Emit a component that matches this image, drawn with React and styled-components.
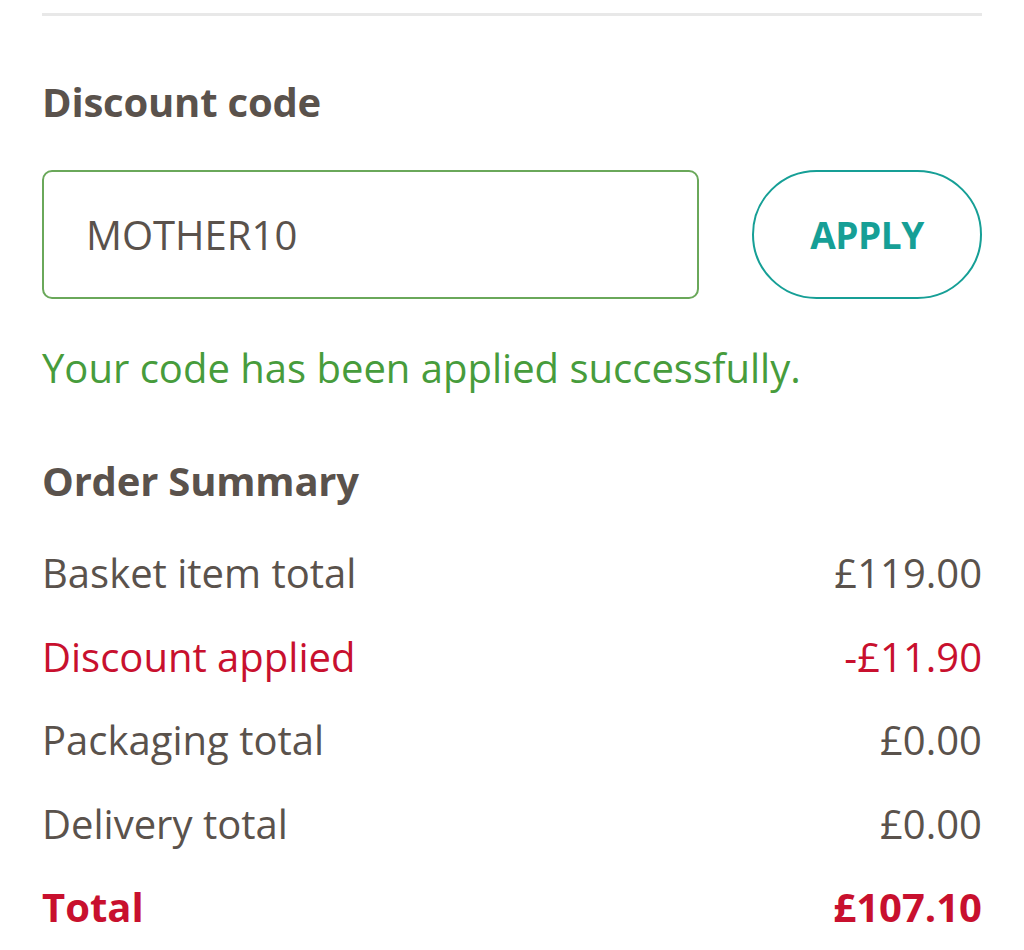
import React from 'react';
import styled, { createGlobalStyle } from 'styled-components';

const textColor = '#5a524c';
const red = '#c8102e';
const green = '#479c3c';
const inputBorder = '#6aa85a';
const teal = '#169f96';

const GlobalStyle = createGlobalStyle`
  html, body {
    margin: 0;
    padding: 0;
    background: #fff;
  }
  body {
    font-family: "Open Sans", "Noto Sans", sans-serif;
    color: ${textColor};
  }
  * { box-sizing: border-box; }
`;

const Page = styled.div`
  width: 1024px;
  padding: 13px 42px 0;
`;

const Divider = styled.hr`
  margin: 0;
  border: none;
  height: 3px;
  background: #e8e8e8;
`;

const Heading = styled.h2`
  margin: ${(p) => p.$top}px 0 0;
  font-size: 40px;
  line-height: 56px;
  font-weight: 700;
  letter-spacing: -0.2px;
  color: ${textColor};
`;

const CodeRow = styled.form`
  display: flex;
  gap: 53px;
  margin-top: 40px;
`;

const CodeInput = styled.input`
  flex: 1;
  height: 129px;
  border: 2px solid ${inputBorder};
  border-radius: 10px;
  padding: 0 0 0 42px;
  font-family: "Open Sans", sans-serif;
  font-size: 40px;
  color: ${textColor};
  background: #fff;
  outline: none;
`;

const ApplyButton = styled.button`
  width: 230px;
  height: 129px;
  border: 2px solid ${teal};
  border-radius: 65px;
  background: #fff;
  color: ${teal};
  font-family: "Open Sans", sans-serif;
  font-size: 37px;
  font-weight: 700;
  letter-spacing: -0.5px;
  cursor: pointer;
`;

const Success = styled.p`
  margin: 41px 0 0;
  font-size: 40px;
  line-height: 56px;
  color: ${green};
`;

const Summary = styled.div`
  margin-top: 22px;
`;

const Row = styled.div`
  display: flex;
  justify-content: space-between;
  height: 83.5px;
  line-height: 83.5px;
  font-size: 40px;
  font-weight: ${(p) => (p.$bold ? 700 : 400)};
  color: ${(p) => (p.$red ? red : textColor)};
`;

const rows = [
  { label: 'Basket item total', value: '£119.00' },
  { label: 'Discount applied', value: '-£11.90', red: true },
  { label: 'Packaging total', value: '£0.00' },
  { label: 'Delivery total', value: '£0.00' },
  { label: 'Total', value: '£107.10', red: true, bold: true },
];

export default function App() {
  return (
    <Page>
      <GlobalStyle />
      <Divider />
      <Heading $top={58}>Discount code</Heading>
      <CodeRow onSubmit={(e) => e.preventDefault()}>
        <CodeInput defaultValue="MOTHER10" />
        <ApplyButton type="submit">APPLY</ApplyButton>
      </CodeRow>
      <Success>Your code has been applied successfully.</Success>
      <Heading $top={57}>Order Summary</Heading>
      <Summary>
        {rows.map((r) => (
          <Row key={r.label} $red={r.red} $bold={r.bold}>
            <span>{r.label}</span>
            <span>{r.value}</span>
          </Row>
        ))}
      </Summary>
    </Page>
  );
}
